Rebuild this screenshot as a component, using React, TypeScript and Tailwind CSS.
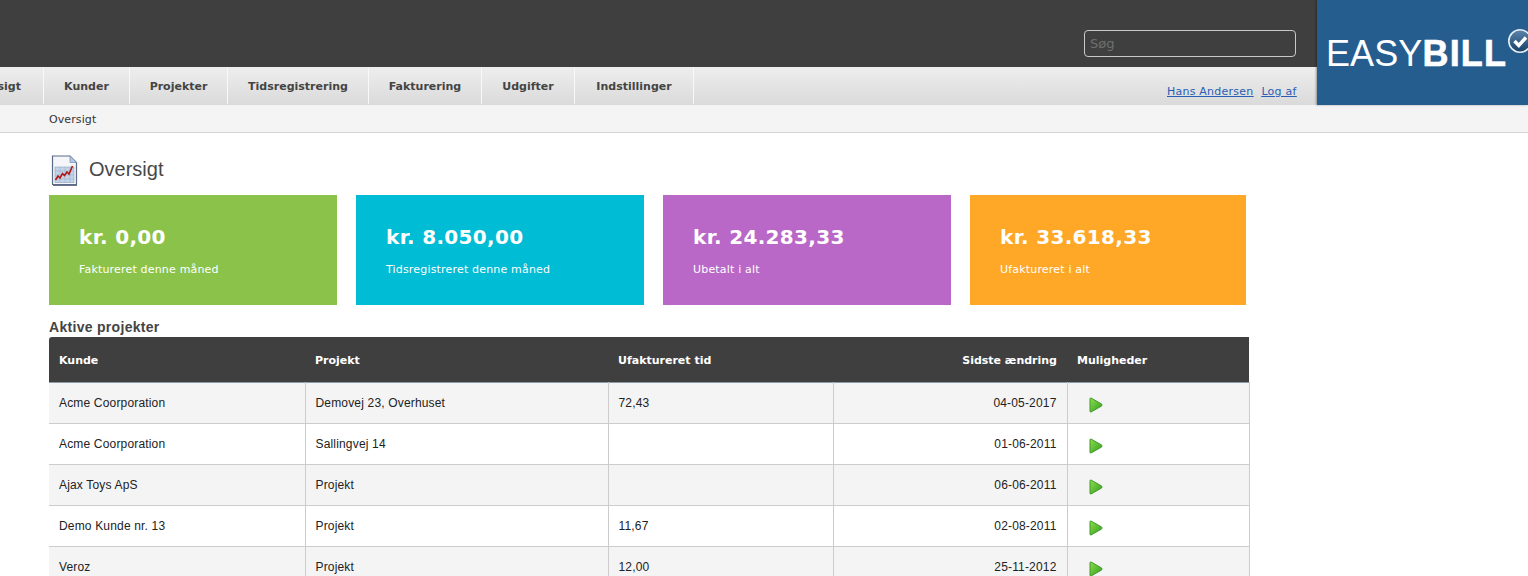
import React from "react";

const tabs = [
  { label: "Oversigt", w: "w-[98px] -ml-[54px]" },
  { label: "Kunder", w: "w-[86px]" },
  { label: "Projekter", w: "w-[98px]" },
  { label: "Tidsregistrering", w: "w-[141px]" },
  { label: "Fakturering", w: "w-[113px]" },
  { label: "Udgifter", w: "w-[93px]" },
  { label: "Indstillinger", w: "w-[119px]" },
];

const cards = [
  { amount: "kr. 0,00", label: "Faktureret denne måned", c: "bg-[#8bc34a] w-[288px]" },
  { amount: "kr. 8.050,00", label: "Tidsregistreret denne måned", c: "bg-[#00bcd4] w-[288px]" },
  { amount: "kr. 24.283,33", label: "Ubetalt i alt", c: "bg-[#ba68c8] w-[288px]" },
  { amount: "kr. 33.618,33", label: "Ufaktureret i alt", c: "bg-[#ffa726] w-[276px]" },
];

const rows = [
  ["Acme Coorporation", "Demovej 23, Overhuset", "72,43", "04-05-2017"],
  ["Acme Coorporation", "Sallingvej 14", "", "01-06-2011"],
  ["Ajax Toys ApS", "Projekt", "", "06-06-2011"],
  ["Demo Kunde nr. 13", "Projekt", "11,67", "02-08-2011"],
  ["Veroz", "Projekt", "12,00", "25-11-2012"],
];

function Play() {
  return (
    <svg width="14" height="16" viewBox="0 0 14 16" className="block ml-[21px] mt-[4px]">
      <defs>
        <linearGradient id="pg" x1="0" y1="0" x2="1" y2="1">
          <stop offset="0" stopColor="#8fdc4a" />
          <stop offset="1" stopColor="#2f9e1e" />
        </linearGradient>
      </defs>
      <path d="M2 1 L12.6 7 Q13.4 8 12.6 9 L2 15 Q1 15.2 1 14.2 L1 1.8 Q1 0.8 2 1 Z" fill="url(#pg)" stroke="#3f9a2a" strokeWidth="1" />
    </svg>
  );
}

function ChartDoc() {
  return (
    <svg width="30" height="34" viewBox="0 0 30 34" className="block">
      <path d="M3 3 H20 L27 9.5 V32 H3 Z" fill="#6b7486" />
      <path d="M2.5 2 H20 L26.5 8.5 V30.5 H2.5 Z" fill="#f4f6fa" stroke="#5b6a88" strokeWidth="1.2" />
      <path d="M20 2 V8.5 H26.5 Z" fill="#b4c8e6" stroke="#7f93b5" strokeWidth="0.8" />
      <rect x="5" y="13" width="19" height="15.5" fill="#c3d3e8" stroke="#8ea1bf" strokeWidth="0.6" />
      <path d="M5 17 H24 M5 21 H24 M5 25 H24 M10 13 V28.5 M15 13 V28.5 M20 13 V28.5" stroke="#97abc8" strokeWidth="0.5" />
      <path d="M5.5 26 L8 22 L10 24 L12.5 19.5 L14.5 21.5 L17 18 L19 20 L22.5 12" fill="none" stroke="#b01818" strokeWidth="1.6" />
    </svg>
  );
}

export default function App() {
  return (
    <div className="w-[1528px] h-[576px] overflow-hidden bg-white relative font-['Liberation_Sans',Arial,sans-serif]">
      <div className="h-[67px] bg-[#3f3f3f] flex justify-start">
        <input
          placeholder="Søg"
          className="ml-[1084px] mt-[30px] w-[212px] h-[27px] bg-[#3f3f3f] border border-[#c8c8c8] rounded-[4px] px-[5px] text-[13px] font-['DejaVu_Sans',sans-serif] placeholder:text-[#6f6f6f] outline-none"
        />
      </div>

      <div className="h-[38px] bg-gradient-to-b from-[#eeeeee] to-[#dadada] flex font-['DejaVu_Sans',sans-serif] relative">
        {tabs.map((t) => (
          <div
            key={t.label}
            className={`${t.w} h-[37px] shrink-0 flex items-center justify-center text-[11px] font-bold text-[#444444] border-r border-r-[#f8f8f8] pt-[3px]`}
          >
            {t.label}
          </div>
        ))}
        <div className="absolute left-[1167px] top-[17px] flex gap-[8px] text-[11px] text-[#2a5db5] underline whitespace-nowrap tracking-[0.23px]">
          <a>Hans Andersen</a>
          <a>Log af</a>
        </div>
      </div>

      <div className="h-[28px] bg-[#f4f4f4] border-b border-b-[#d4d4d4] pl-[49px] flex items-center font-['DejaVu_Sans',sans-serif] text-[11px] text-[#333333] pt-[3px] tracking-[0.1px]">
        Oversigt
      </div>

      <div className="absolute left-[1317px] top-0 w-[211px] h-[105px] bg-[#255d8f] shadow-[-1px_0_2px_rgba(0,0,0,0.35)] overflow-hidden text-white">
        <div className="absolute left-[9px] top-[34px] text-[36px] leading-[40px] whitespace-nowrap tracking-[0.1px]">
          EASY<span className="font-bold tracking-[1.2px] [-webkit-text-stroke:0.6px_white]">BILL</span>
        </div>
        <svg width="26" height="26" viewBox="0 0 26 26" className="absolute left-[190px] top-[28px]">
          <defs>
            <linearGradient id="cg" x1="0" y1="0" x2="0" y2="1">
              <stop offset="0" stopColor="#5c86ad" />
              <stop offset="1" stopColor="#173f66" />
            </linearGradient>
          </defs>
          <circle cx="13" cy="13" r="11.2" fill="url(#cg)" stroke="#e6eef5" strokeWidth="1.6" />
          <path d="M7.5 13 L11.8 17.5 L19 9.5" fill="none" stroke="#ffffff" strokeWidth="3.4" />
        </svg>
      </div>

      <div className="pl-[49px]">
        <div className="h-[62px] flex items-start pt-[21px]">
          <div className="ml-[1px]"><ChartDoc /></div>
          <h1 className="ml-[9px] mt-[3px] text-[20px] leading-[24px] text-[#484848]">Oversigt</h1>
        </div>

        <div className="flex gap-[19px]">
          {cards.map((c) => (
            <div key={c.label} className={`${c.c} h-[110px] pl-[30px] pt-[30px] text-white font-['DejaVu_Sans',sans-serif]`}>
              <div className="text-[20px] leading-[25px] font-bold tracking-[0.33px]">{c.amount}</div>
              <div className="text-[11px] leading-[14px] mt-[13px] tracking-[0.18px]">{c.label}</div>
            </div>
          ))}
        </div>

        <h2 className="mt-[14px] text-[14px] leading-[16px] font-bold text-[#444444] tracking-[0.3px]">Aktive projekter</h2>

        <table className="mt-[2px] w-[1200px] table-fixed border-collapse text-[12px] text-[#222222] tracking-[0.17px]">
          <colgroup>
            <col className="w-[256px]" />
            <col className="w-[303px]" />
            <col className="w-[225px]" />
            <col className="w-[234px]" />
            <col className="w-[182px]" />
          </colgroup>
          <thead>
            <tr className="h-[45px] bg-[#3f3f3f] text-white text-[11px] tracking-normal font-['DejaVu_Sans',sans-serif] border-b border-b-[#8a9aa8]">
              <th className="text-left font-bold pl-[10px] pt-[3px] rounded-tl-[3px]">Kunde</th>
              <th className="text-left font-bold pl-[10px] pt-[3px]">Projekt</th>
              <th className="text-left font-bold pl-[10px] pt-[3px]">Ufaktureret tid</th>
              <th className="text-right font-bold pr-[10px] pt-[3px]">Sidste ændring</th>
              <th className="text-left font-bold pl-[10px] pt-[3px]">Muligheder</th>
            </tr>
          </thead>
          <tbody>
            {rows.map((r, i) => (
              <tr key={i} className={`h-[41px] border-b border-b-[#cccccc] ${i % 2 === 0 ? "bg-[#f4f4f4]" : "bg-white"}`}>
                <td className="pl-[10px]">{r[0]}</td>
                <td className="pl-[10px] border-l border-l-[#cccccc]">{r[1]}</td>
                <td className="pl-[10px] border-l border-l-[#cccccc]">{r[2]}</td>
                <td className="pr-[10px] text-right border-l border-l-[#cccccc]">{r[3]}</td>
                <td className="border-l border-r border-l-[#cccccc] border-r-[#cccccc]"><Play /></td>
              </tr>
            ))}
          </tbody>
        </table>
      </div>
    </div>
  );
}
